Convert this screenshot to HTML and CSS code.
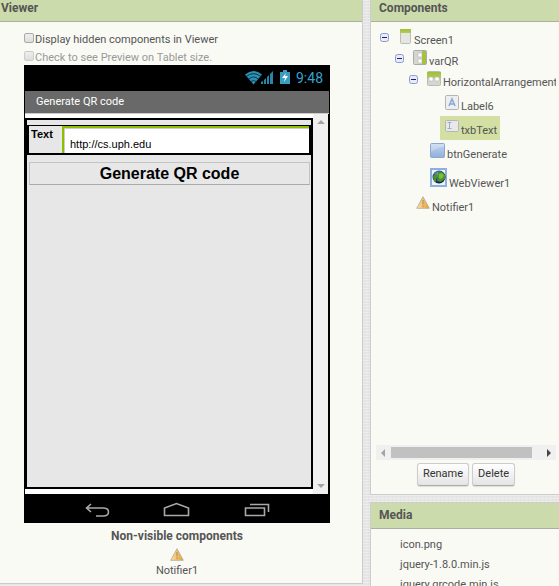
FILE: index.html
```html
<!DOCTYPE html>
<html lang="en">
<head>
<meta charset="utf-8">
<title>Designer</title>
<link rel="stylesheet" href="styles.css">
</head>
<body>
<svg class="defs" aria-hidden="true">
  <defs>
    <linearGradient id="green" x1="0" y1="0" x2="0" y2="1"><stop offset="0" stop-color="#9fbf3b"/><stop offset="1" stop-color="#b3cb55"/></linearGradient>
    <linearGradient id="blue" x1="0" y1="0" x2="0" y2="1"><stop offset="0" stop-color="#c3d5ee"/><stop offset="1" stop-color="#8fafdc"/></linearGradient>
    <linearGradient id="amber" x1="0" y1="0" x2="1" y2="0"><stop offset="0" stop-color="#fbe3a8"/><stop offset="1" stop-color="#eb9d2c"/></linearGradient>
    <radialGradient id="globe" cx=".4" cy=".3" r=".7"><stop offset="0" stop-color="#7fa8c8"/><stop offset=".5" stop-color="#234f7c"/><stop offset="1" stop-color="#0b1c38"/></radialGradient>
    <symbol id="minus" viewBox="0 0 9 9"><rect x=".5" y=".5" width="8" height="8" rx="2" fill="#e9ecf6" stroke="#8c9bcf"/><path d="M2 4.5h5" stroke="#1a1a9c"/></symbol>
    <symbol id="warn" viewBox="0 0 14 13"><path d="M7 .7 13.3 12.3H.7z" fill="url(#amber)" stroke="#b5afa0" stroke-width=".9" stroke-linejoin="round"/><path d="M7 4v4.500M7 9.500v1.500" stroke="#a58a5c" stroke-width="1"/></symbol>
  </defs>
</svg>
<main class="workspace">
  <section class="panel viewer">
    <h2 class="panel-title">Viewer</h2>
    <div class="viewer-body">
      <label class="option"><input type="checkbox">Display hidden components in Viewer</label>
      <label class="option disabled"><input type="checkbox" disabled>Check to see Preview on Tablet size.</label>
      <div class="phone">
        <div class="status">
          <svg class="status-icons" viewBox="0 0 46 16" width="46" height="16">
            <path d="M0 4.500Q8.500-2.500 17 4.500L8.500 14.500z" fill="#2b91b5"/>
            <path d="M1.500 6.300Q8.500 1 15.500 6.300M3.700 9Q8.500 5 13.300 9M6 11.500Q8.500 9.500 11 11.500" fill="none" stroke="#05202b" stroke-width=".8"/>
            <path d="M16 14v-2l2-1v3zM19 14v-4l2-2v6zM22 14V7l2-2v9zM25 14V4l3-3v13z" fill="#2787a8"/>
            <path d="M35 2h3V0h4v2h3v12H35z" fill="#3a9dc0"/><path d="m41 3-4 5h3l-1 4 4-6h-3z" fill="#fff"/>
          </svg>
          <span>9:48</span>
        </div>
        <div class="app-title">Generate QR code</div>
        <div class="screen">
          <div class="canvas">
            <div class="arrangement">
              <label class="field-label" for="qr-text">Text</label>
              <input class="field" id="qr-text" type="text" value="http://cs.uph.edu">
            </div>
            <button class="generate" type="button">Generate QR code</button>
          </div>
          <div class="vscroll"><i class="up"></i><i class="down"></i></div>
        </div>
        <svg class="navbar" viewBox="0 0 306 29" width="306" height="29" fill="none" stroke="#a9a9a9" stroke-width="1.600">
          <path d="M67 10 62.500 14l4.500 4M63 14h16q5.500 0 5.500 4t-5.500 4h-7"/>
          <path d="M140.500 21.500v-7.500L152.500 9.500 164.500 14v7.500z"/>
          <path d="M221.500 14h19v7.500h-19zM226 10.500h18.500v7.500"/>
        </svg>
      </div>
      <div class="nonvisible">
        <strong>Non-visible components</strong>
        <svg width="14" height="13"><use href="#warn"/></svg>
        <span>Notifier1</span>
      </div>
    </div>
  </section>
  <div class="side">
    <section class="panel components">
      <h2 class="panel-title inset">Components</h2>
      <div class="tree">
        <div class="node d0"><svg class="toggle"><use href="#minus"/></svg><span class="item">
          <svg width="14" height="15"><rect x="2.500" y=".5" width="10" height="14" rx="1" fill="#e5e5e1" stroke="#bdbdb8"/><path d="M2 0h11v4H2z" fill="url(#green)"/></svg>Screen1</span></div>
        <div class="node d1"><svg class="toggle"><use href="#minus"/></svg><span class="item">
          <svg width="14" height="15"><rect x=".5" y=".5" width="13" height="14" rx="1" fill="#d5d5d2" stroke="#aaa"/><path d="M9 1h4v13H9z" fill="#a4c43f"/><rect x="5" y="3" width="4" height="4" rx="1" fill="#fff" stroke="#aaa" stroke-width=".5"/><rect x="5" y="9" width="4" height="4" rx="1" fill="#fff" stroke="#aaa" stroke-width=".5"/></svg>varQR</span></div>
        <div class="node d2"><svg class="toggle"><use href="#minus"/></svg><span class="item">
          <svg width="14" height="15"><rect x=".5" y=".5" width="13" height="14" rx="1" fill="#d5d5d2" stroke="#bbb"/><path d="M0 1h14v6H0z" fill="url(#green)"/><rect x="2" y="6" width="4" height="4" rx="1" fill="#fff" stroke="#aaa" stroke-width=".5"/><rect x="8" y="6" width="4" height="4" rx="1" fill="#fff" stroke="#aaa" stroke-width=".5"/></svg>HorizontalArrangement</span></div>
        <div class="node d3 leaf"><span class="item">
          <svg width="14" height="15"><rect x=".5" y=".5" width="13" height="14" rx="1" fill="#eeeeee" stroke="#b5b5b5"/><path d="M4 11 7 4l3 7M5 9h4" fill="none" stroke="#8aa9dc" stroke-width="1.600"/></svg>Label6</span></div>
        <div class="node d3 leaf lower"><span class="item selected">
          <svg width="14" height="12"><rect x=".5" y=".5" width="13" height="11" rx="1" fill="#e8e8e8" stroke="#b5b5b5"/><path d="M2.500 2.500h4M4.500 2.500v6M2.500 8.500h4" stroke="#9daec9"/></svg>txbText</span></div>
        <div class="node d4 leaf"><span class="item">
          <svg width="15" height="15"><rect x=".5" y=".5" width="14" height="14" rx="1" fill="url(#blue)" stroke="#8ba7ce"/><path d="M1 1h13v3Q8 4 1 9z" fill="#fff" opacity=".25"/></svg>btnGenerate</span></div>
        <div class="node d4 leaf tall"><span class="item">
          <svg width="17" height="19"><rect x="1" y="1" width="15" height="17" fill="#eef3fa" stroke="#8fb0dc" stroke-width="2"/><circle cx="9" cy="9" r="6.500" fill="url(#globe)"/><path d="M3 9q1-3 4-3l1 2-2 3v3l-2-1zM8 4l4 0 3 3v4l-4 3-4-1 1-4z" fill="#4a9130"/><path d="M9 6q4-2 5 2l-3 3-2-1z" fill="#7fbd35"/></svg>WebViewer1</span></div>
        <div class="node d5 leaf lower"><span class="item">
          <svg width="14" height="13"><use href="#warn"/></svg>Notifier1</span></div>
      </div>
      <div class="hscroll"><i class="left"></i><b class="thumb"></b><i class="right"></i></div>
      <div class="actions"><button type="button">Rename</button><button type="button">Delete</button></div>
    </section>
    <section class="panel media">
      <h2 class="panel-title inset tall-title">Media</h2>
      <ul><li>icon.png</li><li>jquery-1.8.0.min.js</li><li>jquery.qrcode.min.js</li></ul>
    </section>
  </div>
</main>
</body>
</html>
```

FILE: styles.css
```css
* { box-sizing: border-box; }
body {
  margin: 0;
  height: 100vh;
  overflow: hidden;
  font: 11px/18px Roboto, sans-serif;
  color: #555;
  background-color: #e6e6e6;
  background-image:
    repeating-linear-gradient(0deg, rgba(255,255,255,.3) 0 1px, transparent 1px 3px),
    repeating-linear-gradient(90deg, rgba(0,0,0,.02) 0 1px, transparent 1px 4px);
}
svg { display: block; flex: none; }
.defs { position: absolute; width: 0; height: 0; }
.workspace { display: flex; align-items: flex-start; gap: 7px; }
.panel { background: #f9faf4; border: 1px solid #ccc; }
.panel-title {
  margin: 0;
  height: 22px;
  padding: 0 1px;
  font-size: 12px;
  line-height: 16px;
  font-weight: 700;
  background: #ccdbab;
  border-bottom: 1px solid #aaafa0;
}
.inset { padding-left: 8px; }
.viewer { flex: 1; min-width: 0; border-width: 0 1px 1px 0; }
.viewer-body { padding: 9px 0 3px 24px; }
.option { display: flex; align-items: center; height: 18px; }
.option input {
  appearance: none;
  width: 10px;
  height: 10px;
  margin: 0 1px 5px 0;
  border: 1px solid #aaa;
  border-radius: 2px;
  background: linear-gradient(#eee, #ddd);
}
.disabled { color: #999; }
.disabled input { border-color: #ccc; }
.phone { width: 306px; margin-top: -2px; background: #000; }
.status {
  display: flex;
  justify-content: flex-end;
  align-items: center;
  gap: 5px;
  height: 26px;
  padding-right: 7px;
  font: 14px/26px Roboto, sans-serif;
  color: #33a4d0;
}
.app-title {
  height: 23px;
  margin: 0 1px;
  padding-left: 11px;
  line-height: 21px;
  color: #fff;
  background: #696969;
  border-bottom: 1px solid #ccc;
}
.screen { display: flex; height: 380px; margin: 0 2px 0 1px; background: #fff; }
.canvas {
  flex: 1;
  margin: 4px 0 5px;
  padding-top: 5px;
  border: 2px solid #000;
  background: #e7e7e7;
}
.arrangement { display: flex; height: 30px; border: 2px solid #000; border-top-width: 1px; }
.field-label {
  width: 33px;
  padding-left: 2px;
  font: bold 11px/17px "Liberation Sans", sans-serif;
  color: #000;
}
.field {
  flex: 1;
  min-width: 0;
  padding: 6px 6px 0;
  border: solid #8fbe00;
  border-width: 2px 0 0 2px;
  border-radius: 0;
  background: #fff;
  box-shadow: inset 1px 1px #ccc;
  font: 11px "Liberation Sans", sans-serif;
  color: #000;
}
.generate {
  display: block;
  width: calc(100% - 3px);
  height: 23px;
  margin: 7px 1px 0 2px;
  padding: 0;
  border: 1px solid #c4c4c4;
  border-bottom-color: #aaa;
  background: #e7e7e7;
  font: bold 16px/20px "Liberation Sans", sans-serif;
  color: #000;
}
.vscroll {
  display: flex;
  flex-direction: column;
  justify-content: space-between;
  align-items: center;
  width: 15px;
  padding: 6px 0;
  background: #f0f0f0;
}
.up, .down { border: 4px solid transparent; }
.up { border-top: 0; border-bottom-color: #a3a3a3; }
.down { border-bottom: 0; border-top-color: #a3a3a3; }
.nonvisible {
  display: flex;
  flex-direction: column;
  align-items: center;
  width: 306px;
  padding-top: 4px;
}
.nonvisible strong { font-size: 12px; }
.nonvisible svg { margin: 3px 0 1px; }
.side { width: 189px; }
.components { display: flex; flex-direction: column; height: 495px; border-width: 0 0 1px 1px; }
.tree { flex: 1; margin: 0 3px 0 5px; padding-top: 2px; overflow: hidden; }
.node { display: flex; align-items: flex-end; white-space: nowrap; }
.toggle { width: 9px; height: 9px; margin: 0 4px 8px 0; }
.item { display: flex; align-items: flex-end; gap: 2px; height: 24px; margin-top: -3px; padding: 0 3px 0 5px; }
.item svg { margin-bottom: 6px; }
.d0 .item { height: 29px; }
.d0 { padding-left: 4px; }
.d1 { padding-left: 19px; }
.d2 { padding-left: 33px; }
.d3 { padding-left: 64px; }
.d4 { padding-left: 49px; }
.d5 { padding-left: 35px; }
.leaf .item { height: 24px; margin-top: 0; }
.lower .item svg { margin-bottom: 8px; }
.tall .item { height: 29px; }
.selected { background: #d3dfa3; }
.hscroll {
  display: flex;
  align-items: center;
  height: 15px;
  margin: 0 3px 0 5px;
  padding: 0 5px;
  background: #f0f0f0;
}
.left, .right { border: 4px solid transparent; }
.left { border-left: 0; border-right-color: #a3a3a3; }
.right { border-right: 0; border-left-color: #444; }
.thumb { flex: 1; height: 11px; margin: 0 15px 0 6px; background: #c1c1c1; }
.actions { display: flex; justify-content: center; gap: 3px; padding: 3px 0 8px 2px; }
.actions button {
  height: 23px;
  padding: 0 5px 2px;
  border: 1px solid #ccc;
  border-bottom-color: #aaa;
  border-radius: 3px;
  background: linear-gradient(#fff, #e4e4e4);
  box-shadow: 0 1px 1px #ddd;
  font: 11px Roboto, sans-serif;
  color: #333;
}
.media { margin-top: 7px; border-right: 0; }
.tall-title { height: 26px; padding-top: 4px; }
.media ul { margin: 0; padding: 6px 0 20px 29px; list-style: none; line-height: 20px; }
```
